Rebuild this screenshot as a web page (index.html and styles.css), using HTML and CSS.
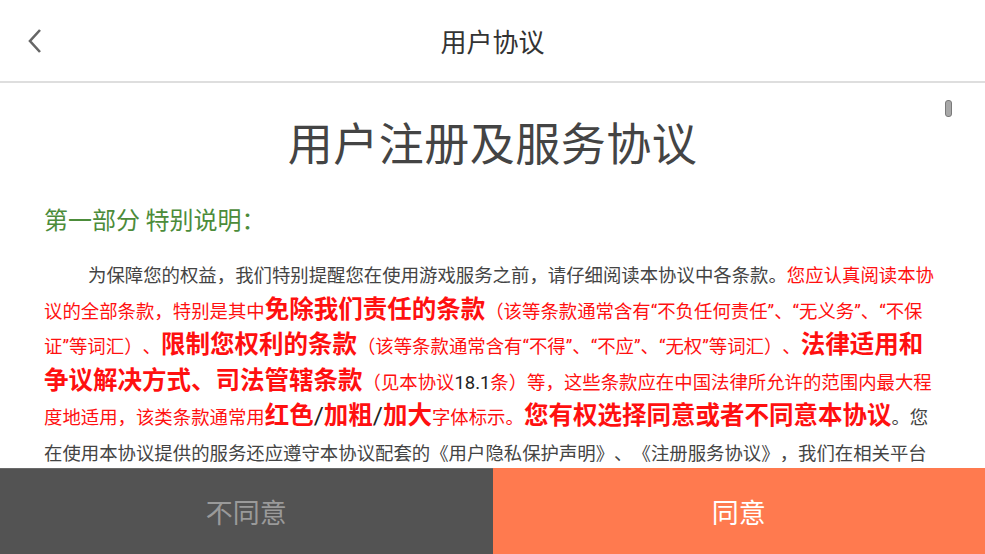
FILE: index.html
```html
<!DOCTYPE html>
<html lang="zh-CN">
<head>
<meta charset="utf-8">
<title>用户协议</title>
<link rel="stylesheet" href="styles.css">
</head>
<body>
<div class="app">
  <header class="topbar">
    <svg class="back" width="20" height="30" viewBox="0 0 20 30"><polyline points="13,3 3,14 13,25" fill="none" stroke="#666" stroke-width="2.6" stroke-linejoin="miter"/></svg>
    <div class="topbar-title">用户协议</div>
  </header>
  <main class="content">
    <div class="scroll-thumb"></div>
    <h1 class="doc-title">用户注册及服务协议</h1>
    <h2 class="section">第一部分 特别说明：</h2>
    <div class="para">
      <div class="line indent">为保障您的权益，我们特别提醒您在使用游戏服务之前，请仔细阅读本协议中各条款。<span class="red">您应认真阅读本协</span></div>
      <div class="line red">议的全部条款，特别是其中<b class="big">免除我们责任的条款</b>（该等条款通常含有“不负任何责任”、“无义务”、“不保</div>
      <div class="line red">证”等词汇）、<b class="big">限制您权利的条款</b>（该等条款通常含有“不得”、“不应”、“无权”等词汇）、<b class="big">法律适用和</b></div>
      <div class="line red"><b class="big">争议解决方式、司法管辖条款</b>（见本协议<span class="dark">18.1</span>条）等，这些条款应在中国法律所允许的范围内最大程</div>
      <div class="line red">度地适用，该类条款通常用<b class="big">红色</b><b class="big dark">/</b><b class="big">加粗</b><b class="big dark">/</b><b class="big">加大</b>字体标示。<b class="big">您有权选择同意或者不同意本协议</b><span class="grey">。您</span></div>
      <div class="line">在使用本协议提供的服务还应遵守本协议配套的《用户隐私保护声明》、《注册服务协议》，我们在相关平台</div>
    </div>
  </main>
  <footer class="actions">
    <button class="btn disagree">不同意</button>
    <button class="btn agree">同意</button>
  </footer>
</div>
</body>
</html>
```

FILE: styles.css
```css
* { box-sizing: border-box; }
html, body {
  margin: 0;
  padding: 0;
  background: #fff;
  font-family: "Noto Sans CJK SC", "Noto Sans", sans-serif;
}
.app {
  width: 985px;
  height: 554px;
  display: flex;
  flex-direction: column;
  overflow: hidden;
}
.topbar {
  position: relative;
  height: 83px;
  flex: none;
  border-bottom: 2px solid #dedede;
  display: flex;
  align-items: center;
  justify-content: center;
}
.back {
  position: absolute;
  left: 27px;
  top: 27px;
}
.topbar-title {
  font-size: 26px;
  color: #333;
  margin-top: -1px;
}
.content {
  position: relative;
  flex: 1;
  overflow: hidden;
  padding: 0 44px;
}
.scroll-thumb {
  position: absolute;
  right: 33px;
  top: 17px;
  width: 7px;
  height: 17px;
  border-radius: 3px;
  background: #a8a8a8;
  border: 1px solid #7a7a7a;
}
.doc-title {
  margin: 29px 0 0;
  text-align: center;
  font-size: 45px;
  line-height: 60px;
  font-weight: normal;
  color: #444;
  letter-spacing: 0.5px;
}
.section {
  margin: 30px 0 0;
  font-size: 24px;
  line-height: 34px;
  font-weight: normal;
  color: #4c8c3a;
}
.para {
  margin-top: 22px;
  font-family: "Roboto", "Noto Sans CJK SC", sans-serif;
  font-size: 18.4px;
  color: #444;
  text-spacing-trim: space-all;
}
.line {
  height: 35.5px;
  line-height: 35.5px;
  white-space: nowrap;
}
.indent { padding-left: 44px; }
.red { color: #ff1010; }
.dark { color: #222; }
.grey { color: #444; }
.big {
  font-size: 24.5px;
  line-height: 1;
  font-weight: bold;
}
b.dark { font-weight: normal; }
.actions {
  height: 86px;
  flex: none;
  display: flex;
}
.btn {
  flex: 1;
  border: 0;
  margin: 0;
  font-family: inherit;
  font-size: 27px;
}
.disagree {
  background: #535353;
  color: #9a9a9a;
  border-top: 1px solid #6a6a6a;
}
.agree {
  background: #ff7a4f;
  color: #fff;
}
```
